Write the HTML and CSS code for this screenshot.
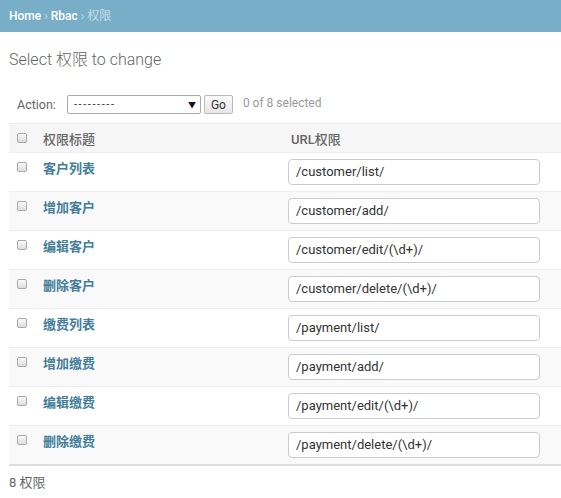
FILE: index.html
```html
<!DOCTYPE html>
<html>
<head>
<meta charset="utf-8">
<link rel="stylesheet" href="styles.css">
</head>
<body>
<div class="breadcrumbs"><a href="#">Home</a> › <a href="#">Rbac</a> › 权限</div>
<div class="content">
  <h1>Select 权限 to change</h1>
  <div class="actions">
    <label>Action:</label>
    <div class="select"><span class="dash">---------</span><span class="arrow">▼</span></div>
    <button class="go">Go</button>
    <span class="counter">0 of 8 selected</span>
  </div>
  <table class="results">
    <thead>
      <tr><th class="c1"><span class="cb"></span></th><th class="c2">权限标题</th><th class="c3">URL权限</th></tr>
    </thead>
    <tbody>
      <tr><td class="c1"><span class="cb"></span></td><td class="c2"><a href="#">客户列表</a></td><td class="c3"><div class="inp">/customer/list/</div></td></tr>
      <tr class="alt"><td class="c1"><span class="cb"></span></td><td class="c2"><a href="#">增加客户</a></td><td class="c3"><div class="inp">/customer/add/</div></td></tr>
      <tr><td class="c1"><span class="cb"></span></td><td class="c2"><a href="#">编辑客户</a></td><td class="c3"><div class="inp">/customer/edit/(\d+)/</div></td></tr>
      <tr class="alt"><td class="c1"><span class="cb"></span></td><td class="c2"><a href="#">删除客户</a></td><td class="c3"><div class="inp">/customer/delete/(\d+)/</div></td></tr>
      <tr><td class="c1"><span class="cb"></span></td><td class="c2"><a href="#">缴费列表</a></td><td class="c3"><div class="inp">/payment/list/</div></td></tr>
      <tr class="alt"><td class="c1"><span class="cb"></span></td><td class="c2"><a href="#">增加缴费</a></td><td class="c3"><div class="inp">/payment/add/</div></td></tr>
      <tr><td class="c1"><span class="cb"></span></td><td class="c2"><a href="#">编辑缴费</a></td><td class="c3"><div class="inp">/payment/edit/(\d+)/</div></td></tr>
      <tr class="alt"><td class="c1"><span class="cb"></span></td><td class="c2"><a href="#">删除缴费</a></td><td class="c3"><div class="inp">/payment/delete/(\d+)/</div></td></tr>
    </tbody>
  </table>
  <p class="paginator">8 权限</p>
</div>
</body>
</html>
```
FILE: styles.css
```css
* { box-sizing: border-box; }
body {
  margin: 0;
  font-family: Roboto, "Noto Sans CJK SC", "Liberation Sans", sans-serif;
  font-size: 13px;
  color: #333;
  background: #fff;
}
.breadcrumbs {
  background: #79aec8;
  color: #c4dce8;
  height: 32px;
  padding: 0 9px;
  line-height: 33px;
  font-size: 12px;
}
.breadcrumbs a { color: #fff; text-decoration: none; font-weight: 500; }
.content { padding: 0 0 0 9px; }
h1 {
  margin: 0;
  padding: 17px 0 0;
  height: 56px;
  font-size: 16px;
  font-weight: 300;
  color: #666;
  line-height: 22px;
}
.actions {
  display: flex;
  align-items: center;
  height: 35px;
  padding: 0 8px 2px;
}
.actions label { color: #666; margin-right: 11px; font-size: 12.5px; }
.select {
  width: 134px;
  height: 19px;
  border: 1px solid #aaa;
  border-radius: 2px;
  display: flex;
  justify-content: space-between;
  align-items: center;
  padding: 0 4px 0 6px;
  font-size: 12px;
  color: #333;
  background: #fff;
}
.select .dash { letter-spacing: 1.6px; font-size: 11px; }
.select .arrow { font-size: 8px; color: #111; }
.go {
  margin-left: 3px;
  height: 19px;
  width: 29px;
  padding: 0;
  font-family: inherit;
  font-size: 12px;
  border: 1px solid #bbb;
  border-radius: 2px;
  background: linear-gradient(#fbfbfb, #e6e6e6);
  color: #333;
}
.counter { margin-left: 10px; color: #999; margin-top: -3px; font-size: 12px; }
table.results {
  border-collapse: collapse;
  width: 552px;
  table-layout: fixed;
  border-bottom: 2px solid #ddd;
}
thead th {
  background: #f6f6f6;
  border-top: 1px solid #eee;
  border-bottom: 1px solid #eee;
  height: 29px;
  text-align: left;
  font-weight: 500;
  color: #666;
  padding: 0 8px;
  vertical-align: middle;
}
th.c1, td.c1 { width: 26px; }
th.c2, td.c2 { width: 245px; }
th.c3 { padding-left: 11px; }
tbody td {
  border-bottom: 1px solid #eee;
  padding: 8px;
  vertical-align: top;
  height: 39px;
}
tbody tr.alt td { background: #f9f9f9; }
tbody td.c3 { padding: 6px 0 5px 8px; }
tbody td.c1 { padding-top: 9px; }
td.c2 a { color: #447e9b; font-weight: 700; text-decoration: none; line-height: 14px; display: inline-block; }
.cb {
  display: block;
  width: 10px;
  height: 10px;
  border: 1px solid #aaa;
  border-radius: 2px;
  background: linear-gradient(#fafafa, #ddd);
}
.inp {
  width: 252px;
  height: 26px;
  border: 1px solid #ccc;
  border-radius: 4px;
  padding: 0 7px;
  line-height: 24px;
  color: #333;
  background: #fff;
  font-size: 13px;
}
.paginator {
  margin: 0;
  padding: 8px 0;
  color: #666;
  line-height: 17px;
}
```
